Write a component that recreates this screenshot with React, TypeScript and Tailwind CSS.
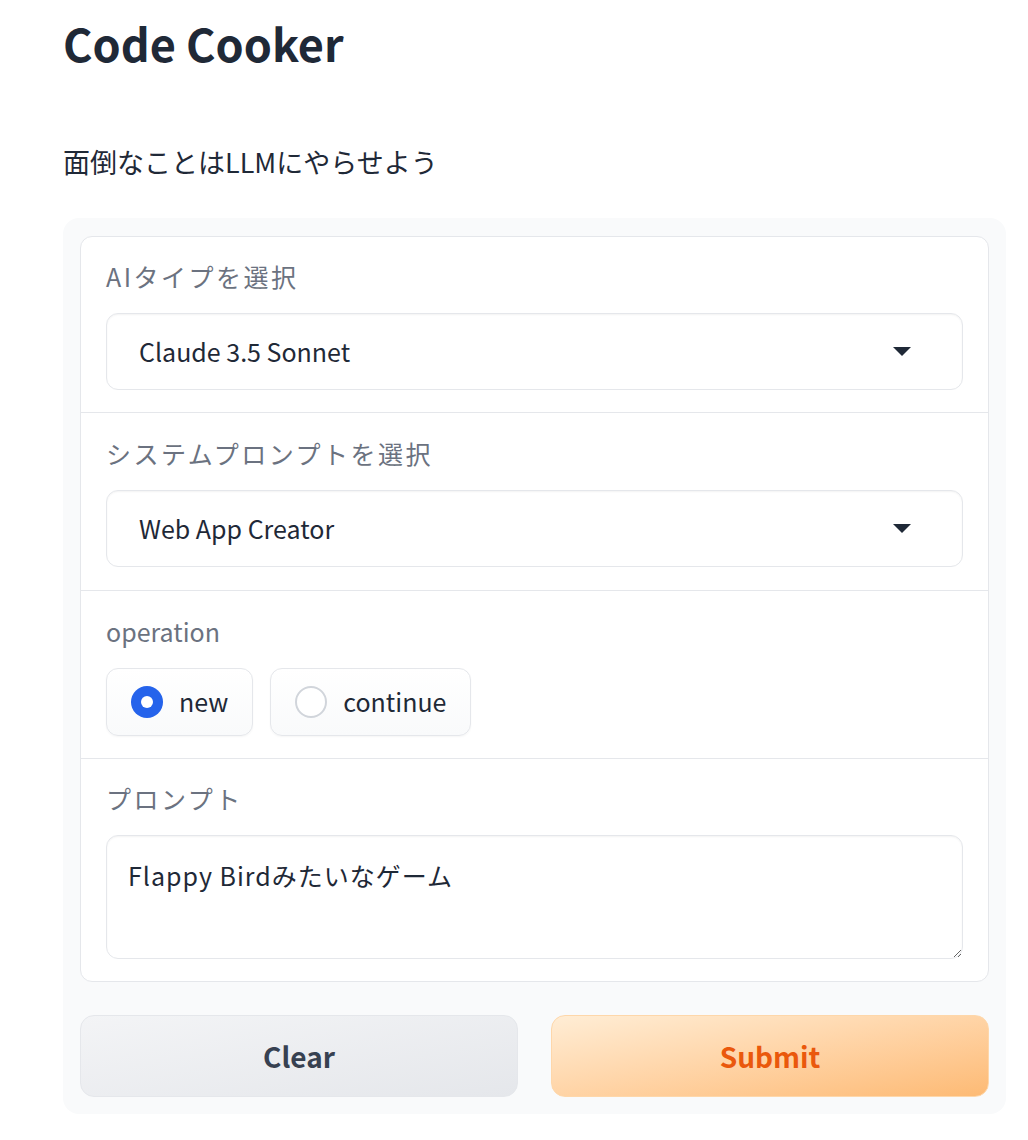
import { useState } from "react";

const FONT = { fontFamily: '"Noto Sans CJK JP", "Noto Sans", sans-serif' };

function Caret() {
    return (
        <svg width="18" height="10" viewBox="0 0 18 10" className="shrink-0">
            <path d="M0 0 H18 L9 9 Z" fill="#1f2937" />
        </svg>
    );
}

function Dropdown({ value }: { value: string }) {
    return (
        <div className="h-[77px] rounded-[12px] border border-[#e5e7eb] bg-white shadow-[inset_0_1px_2px_rgba(0,0,0,0.05)] flex items-center justify-between pl-[32px] pr-[51px]">
            <span className="text-[25px] text-[#1f2937]">{value}</span>
            <Caret />
        </div>
    );
}

function Label({ children, cjk }: { children: React.ReactNode; cjk?: boolean }) {
    return (
        <div className={`h-[26px] leading-[26px] text-[25px] text-[#6b7280] mb-[24px] ${cjk ? "tracking-[2.5px]" : ""}`}>
            {children}
        </div>
    );
}

export default function App() {
    const [op, setOp] = useState("new");
    const [prompt, setPrompt] = useState("Flappy Birdみたいなゲーム");

    return (
        <div className="min-h-screen bg-white" style={FONT}>
            <div className="pl-[63px] pr-[22px] pt-[15px]">
                <h1 className="text-[45px] font-bold text-[#1f2937] leading-[56px]">Code Cooker</h1>
                <p className="mt-[77px] text-[27px] text-[#1f2937] leading-none">面倒なことはLLMにやらせよう</p>

                {/* Form panel */}
                <div className="mt-[43px] bg-[#f9fafb] rounded-[16px] px-[17px] pt-[18px] pb-[17px]">
                    <div className="bg-white border border-[#e5e7eb] rounded-[12px] overflow-hidden">
                        <section className="px-[25px] pt-[26px] pb-[22px] border-b border-[#e5e7eb]">
                            <Label cjk>AIタイプを選択</Label>
                            <Dropdown value="Claude 3.5 Sonnet" />
                        </section>
                        <section className="px-[25px] pt-[27px] pb-[23px] border-b border-[#e5e7eb]">
                            <Label cjk>システムプロンプトを選択</Label>
                            <Dropdown value="Web App Creator" />
                        </section>
                        <section className="px-[25px] pt-[27px] pb-[22px] border-b border-[#e5e7eb]">
                            <Label>operation</Label>
                            <div className="flex gap-[17px]">
                                {["new", "continue"].map((o) => (
                                    <button
                                        key={o}
                                        onClick={() => setOp(o)}
                                        className="h-[68px] flex items-center gap-[16px] pl-[24px] pr-[24px] rounded-[12px] border border-[#e5e7eb] bg-gradient-to-b from-white to-[#f9fafb] shadow-[0_1px_2px_rgba(0,0,0,0.04)]"
                                    >
                                        {op === o ? (
                                            <span className="w-[32px] h-[32px] rounded-full bg-[#2563eb] flex items-center justify-center">
                                                <span className="w-[12px] h-[12px] rounded-full bg-white" />
                                            </span>
                                        ) : (
                                            <span className="w-[32px] h-[32px] rounded-full border-2 border-[#d1d5db] bg-white" />
                                        )}
                                        <span className="text-[25px] text-[#1f2937]">{o}</span>
                                    </button>
                                ))}
                            </div>
                        </section>
                        <section className="px-[25px] pt-[26px] pb-[22px]">
                            <Label cjk>プロンプト</Label>
                            <textarea
                                value={prompt}
                                onChange={(e) => setPrompt(e.target.value)}
                                className="block w-full h-[124px] rounded-[12px] border border-[#e5e7eb] bg-white shadow-[inset_0_1px_2px_rgba(0,0,0,0.05)] px-[21px] pt-[21px] text-[25px] tracking-[1px] text-[#1f2937] outline-none"
                            />
                        </section>
                    </div>

                    <div className="mt-[33px] grid grid-cols-2 gap-[33px]">
                        <button className="h-[82px] rounded-[14px] border border-[#e5e7eb] bg-gradient-to-br from-[#f3f4f6] to-[#e5e7eb] text-[28px] font-bold text-[#374151]">
                            Clear
                        </button>
                        <button className="h-[82px] rounded-[14px] border border-[#fed7aa] bg-gradient-to-br from-[#ffedd5] to-[#fdba74] text-[28px] font-bold text-[#ea580c]">
                            Submit
                        </button>
                    </div>
                </div>
            </div>
        </div>
    );
}
